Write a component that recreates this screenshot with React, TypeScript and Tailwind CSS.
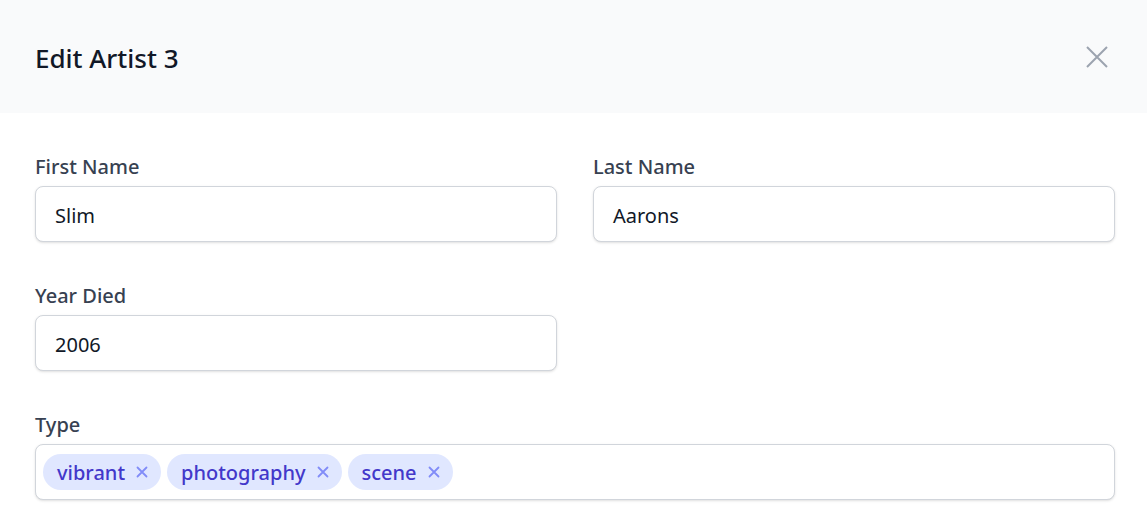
import React from "react";

function Field({ label, value }: { label: string; value: string }) {
  return (
    <div className="flex flex-col">
      <label className="text-[20px] leading-[24px] font-medium text-[#374151] mb-[7px]">{label}</label>
      <div className="h-[56px] rounded-[8px] border border-[#d1d5db] shadow-sm bg-white flex items-center px-[19px] text-[20px] text-[#111827] pt-[3px]">
        {value}
      </div>
    </div>
  );
}

function Chip({ text }: { text: string }) {
  return (
    <span className="h-[36px] rounded-full bg-[#e0e7ff] text-[#4338ca] flex items-center pl-[14px] pr-[13px] gap-[11px] text-[20px] font-medium pt-[1px]">
      {text}
      <svg width="12" height="12" viewBox="0 0 12 12" className="text-[#818cf8] -mt-[2px]">
        <path d="M1.5 1.5 L10.5 10.5 M10.5 1.5 L1.5 10.5" stroke="currentColor" strokeWidth="1.8" strokeLinecap="round" />
      </svg>
    </span>
  );
}

export default function App() {
  return (
    <div className="w-[1147px] h-[532px] bg-white overflow-hidden" style={{ fontFamily: '"Noto Sans", sans-serif' }}>
      <div className="h-[113px] bg-[#f9fafb] flex items-center justify-between pl-[35px] pr-[38px]">
        <h1 className="text-[26px] font-medium text-[#111827] pt-[4px]">Edit Artist 3</h1>
        <svg width="24" height="24" viewBox="0 0 24 24" className="text-[#9ca3af]">
          <path d="M2 2 L22 22 M22 2 L2 22" stroke="currentColor" strokeWidth="2" />
        </svg>
      </div>
      <div className="pl-[35px] pr-[32px] pt-[42px] flex flex-col gap-[42px]">
        <div className="grid grid-cols-2 gap-x-[36px]">
          <Field label="First Name" value="Slim" />
          <Field label="Last Name" value="Aarons" />
        </div>
        <div className="grid grid-cols-2 gap-x-[36px]">
          <Field label="Year Died" value="2006" />
        </div>
        <div className="flex flex-col">
          <label className="text-[20px] leading-[24px] font-medium text-[#374151] mb-[7px]">Type</label>
          <div className="h-[56px] rounded-[8px] border border-[#d1d5db] shadow-sm bg-white flex items-center px-[7px] gap-[6px]">
            <Chip text="vibrant" />
            <Chip text="photography" />
            <Chip text="scene" />
          </div>
        </div>
      </div>
    </div>
  );
}
